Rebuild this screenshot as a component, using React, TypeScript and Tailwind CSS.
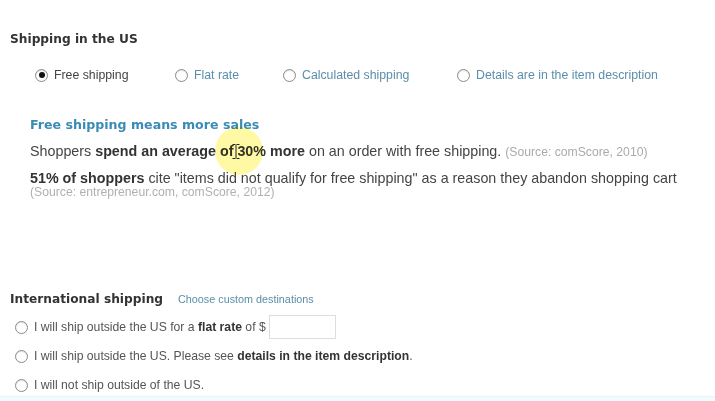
import React from 'react';

const heading = { fontFamily: '"DejaVu Sans", Verdana, sans-serif' };
const body = { fontFamily: '"Liberation Sans", Arial, sans-serif' };

function Radio({ checked = false }: { checked?: boolean }) {
  return (
    <span className="inline-flex h-[13px] w-[13px] shrink-0 items-center justify-center rounded-full border border-[#8a8a8a] bg-white shadow-[inset_0_1px_1px_rgba(0,0,0,0.12)]">
      {checked && <span className="h-[6px] w-[6px] rounded-full bg-[#111]" />}
    </span>
  );
}

export default function App() {
  return (
    <div className="relative flex h-[401px] w-[715px] flex-col overflow-hidden bg-white text-[#444]" style={body}>
      <div className="pl-[10px] pt-[32px] text-[12.2px] font-bold leading-[14px] text-[#333]" style={heading}>
        Shipping in the US
      </div>

      <div className="mt-[22px] flex items-center pl-[35px] text-[12.3px] leading-[14px]">
        <label className="flex w-[140px] items-center gap-[6px] text-[#444]">
          <Radio checked />
          Free shipping
        </label>
        <label className="flex w-[108px] items-center gap-[6px] text-[#5b8eaa]">
          <Radio />
          Flat rate
        </label>
        <label className="flex w-[174px] items-center gap-[6px] text-[#5b8eaa]">
          <Radio />
          Calculated shipping
        </label>
        <label className="flex items-center gap-[6px] text-[#5b8eaa]">
          <Radio />
          Details are in the item description
        </label>
      </div>

      <div className="mt-[36px] pl-[30px] text-[12.6px] font-bold leading-[14px] text-[#3a8bb5]" style={heading}>
        Free shipping means more sales
      </div>
      <div className="mt-[11px] pl-[30px] text-[14.3px] leading-[16px] text-[#444]">
        Shoppers <b className="text-[#333]">spend an average of 30% more</b> on an order with free shipping.{' '}
        <span className="text-[12.2px] text-[#aaa]">(Source: comScore, 2010)</span>
      </div>
      <div className="mt-[10px] pl-[30px] text-[14.3px] leading-[16px] text-[#444]">
        <b className="text-[#333]">51% of shoppers</b> cite "items did not qualify for free shipping" as a reason they abandon shopping cart
      </div>
      <div className="pl-[30px] text-[12.2px] leading-[12px] text-[#b0b0b0]">
        (Source: entrepreneur.com, comScore, 2012)
      </div>

      <div className="mt-[94px] flex items-baseline gap-[15px] pl-[10px] leading-[14px]">
        <span className="text-[12.2px] font-bold text-[#333]" style={heading}>
          International shipping
        </span>
        <span className="text-[10.8px] text-[#5b8eaa]">Choose custom destinations</span>
      </div>

      <div className="mt-[9px] flex h-[24px] items-center gap-[6px] pl-[15px] text-[12.2px] text-[#555]">
        <Radio />
        <span>
          I will ship outside the US for a <b className="text-[#333]">flat rate</b> of $
        </span>
        <span className="-ml-[3px] h-[24px] w-[67px] border border-[#ddd] bg-white" />
      </div>
      <div className="mt-[9px] flex h-[16px] items-center gap-[6px] pl-[15px] text-[12.2px] text-[#555]">
        <Radio />
        <span>
          I will ship outside the US. Please see <b className="text-[#333]">details in the item description</b>.
        </span>
      </div>
      <div className="mt-[13px] flex h-[16px] items-center gap-[6px] pl-[15px] text-[12.2px] text-[#555]">
        <Radio />
        <span>I will not ship outside of the US.</span>
      </div>

      <div className="flex-1" />
      <div className="h-[5px] border-t border-[#e4f6fa] bg-[#f1fbfd]" />

      {/* cursor highlight */}
      <div className="pointer-events-none absolute left-[215px] top-[127px] h-[48px] w-[48px] rounded-full bg-[#fff56a]/60 mix-blend-multiply" />
      <svg className="pointer-events-none absolute left-[232px] top-[144px]" width="8" height="15" viewBox="0 0 8 15">
        <path d="M0.5 0.5h3M4.5 0.5h3M4 1v13M0.5 14.5h3M4.5 14.5h3" stroke="#222" strokeWidth="1" fill="none" />
      </svg>
    </div>
  );
}
